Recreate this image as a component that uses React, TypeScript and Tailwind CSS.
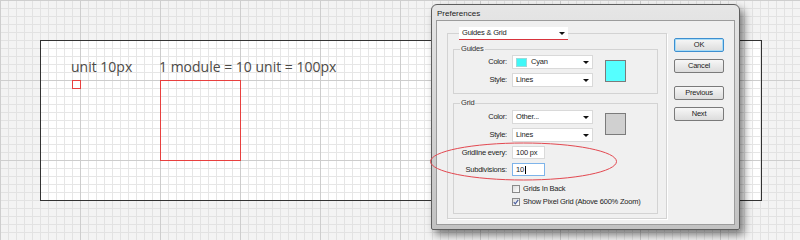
import React from "react";

function Select({ children, w = "w-[81px]" }: { children: React.ReactNode; w?: string }) {
  return (
    <div className={`flex items-center h-[14px] ${w} bg-white border border-[#d9d9d9] pl-[3px] pr-[3px]`}>
      <div className="flex-1 flex items-center gap-[4px] leading-none">{children}</div>
      <div className="w-0 h-0 border-l-[3px] border-r-[3px] border-t-[3px] border-l-transparent border-r-transparent border-t-[#111]" />
    </div>
  );
}

function Label({ children }: { children: React.ReactNode }) {
  return <div className="w-[54px] text-right leading-none pr-[1px]">{children}</div>;
}

function Btn({ children, focus = false, mt = "" }: { children: React.ReactNode; focus?: boolean; mt?: string }) {
  return (
    <div
      className={`${mt} w-[50px] h-[14px] rounded-[2px] flex items-center justify-center leading-none bg-gradient-to-b from-[#f7f7f7] to-[#dcdcdc] ${
        focus ? "border border-[#3d8fd0] shadow-[inset_0_0_0_1px_#a9dcf6]" : "border border-[#7a7a7a]"
      }`}
    >
      {children}
    </div>
  );
}

function Check({ checked = false, children }: { checked?: boolean; children: React.ReactNode }) {
  return (
    <div className="flex items-center h-[10px] ml-[58px] gap-[3px] leading-none">
      <div className="w-[8px] h-[8px] border border-[#8a8a8a] bg-gradient-to-br from-[#dcdcdc] to-[#ffffff] flex items-center justify-center">
        {checked && (
          <svg width="6" height="6" viewBox="0 0 6 6">
            <path d="M0.8 3.2 L2.3 4.8 L5.2 0.8" stroke="#4a5fa0" strokeWidth="1.2" fill="none" />
          </svg>
        )}
      </div>
      <span>{children}</span>
    </div>
  );
}

export default function App() {
  const canvasGrid =
    "bg-[image:linear-gradient(to_right,#cecece_1px,transparent_1px),linear-gradient(to_bottom,#cecece_1px,transparent_1px),linear-gradient(to_right,#e2e2e2_1px,transparent_1px),linear-gradient(to_bottom,#e2e2e2_1px,transparent_1px)] bg-[length:80px_80px,80px_80px,8px_8px,8px_8px]";
  return (
    <div
      className={`relative w-[800px] h-[240px] overflow-hidden pt-[40px] pl-[40px] bg-[#f3f3f3] ${canvasGrid}`}
    >
      {/* Artboard */}
      <div className="w-[722px] h-[161px] border border-[#333333] bg-white bg-[image:linear-gradient(to_right,#cdcdcd_1px,transparent_1px),linear-gradient(to_bottom,#cdcdcd_1px,transparent_1px),linear-gradient(to_right,#e6e6e6_1px,transparent_1px),linear-gradient(to_bottom,#e6e6e6_1px,transparent_1px)] bg-[length:80px_80px,80px_80px,8px_8px,8px_8px] bg-[position:40px_40px] bg-origin-border pt-[18px] pl-[31px] flex font-['Open_Sans',sans-serif] text-[14px] text-[#4d4a46]">
        <div className="w-[88px] flex flex-col">
          <div className="leading-[16px] -ml-[1px] whitespace-nowrap">unit 10px</div>
          <div className="mt-[5px] w-[9px] h-[9px] border border-[#e8403f]" />
        </div>
        <div className="flex flex-col">
          <div className="leading-[16px] -ml-[1px] whitespace-nowrap">1 module = 10 unit = 100px</div>
          <div className="mt-[5px] w-[81px] h-[81px] border border-[#e8403f]" />
        </div>
      </div>

      {/* Dialog window */}
      <div className="absolute left-[431px] top-[4px] w-[309px] h-[226px] rounded-t-[6px] rounded-b-[2px] border border-[#5e5e5e] bg-gradient-to-b from-[#e6e6e6] via-[#d4d4d4] to-[#c2c2c2] shadow-[4px_5px_9px_rgba(0,0,0,0.5)] px-[4px] pb-[4px] flex flex-col font-['Liberation_Sans',Arial,sans-serif] text-[#1c1c1c]">
        <div className="h-[15px] pt-[4px] pl-[1px] text-[8px] leading-[10px] text-[#1a1a1a]">Preferences</div>
        <div className="flex-1 border border-[#9c9c9c] bg-[#f0f0f0] flex pl-[10px] pt-[6px] text-[7.5px] tracking-[-0.2px]">
          {/* main panel */}
          <fieldset className="w-[220px] self-start border border-[#d3d3d3] shadow-[1px_1px_0_#ffffff] px-[5px] pb-[4px]">
            <legend className="ml-[6px]">
              <div className="flex items-center h-[13px] w-[109px] bg-white border-b border-b-[#d8333c] pl-[3px] pr-[3px]">
                <div className="flex-1 leading-none">Guides &amp; Grid</div>
                <div className="w-0 h-0 border-l-[3px] border-r-[3px] border-t-[3px] border-l-transparent border-r-transparent border-t-[#111]" />
              </div>
            </legend>
            <div className="pt-[4px]">
              {/* Guides group */}
              <fieldset className="w-[205px] border border-[#d3d3d3] pt-[1px] pb-[6px]">
                <legend className="ml-[6px] px-[1px] leading-[10px] text-[#333]">Guides</legend>
                <div className="flex items-center">
                  <div className="flex flex-col gap-[4px]">
                    <div className="flex items-center gap-[4px]">
                      <Label>Color:</Label>
                      <Select>
                        <div className="w-[11px] h-[9px] bg-[#3ff7f7] border border-[#9adada]" />
                        <span>Cyan</span>
                      </Select>
                    </div>
                    <div className="flex items-center gap-[4px]">
                      <Label>Style:</Label>
                      <Select>
                        <span>Lines</span>
                      </Select>
                    </div>
                  </div>
                  <div className="ml-[12px] w-[21px] h-[22px] bg-[#55ffff] border border-[#7b7b7b]" />
                </div>
              </fieldset>
              {/* Grid group */}
              <fieldset className="mt-[4px] w-[205px] border border-[#d3d3d3] pt-[2px] pb-[6px]">
                <legend className="ml-[6px] px-[1px] leading-[10px] text-[#333]">Grid</legend>
                <div className="flex items-start">
                  <div className="flex flex-col gap-[4px]">
                    <div className="flex items-center gap-[4px]">
                      <Label>Color:</Label>
                      <Select>
                        <span>Other...</span>
                      </Select>
                    </div>
                    <div className="flex items-center gap-[4px]">
                      <Label>Style:</Label>
                      <Select>
                        <span>Lines</span>
                      </Select>
                    </div>
                  </div>
                  <div className="ml-[12px] mt-[3px] w-[21px] h-[22px] bg-[#d0d0d0] border border-[#7b7b7b]" />
                </div>
                <div className="mt-[4px] flex items-center gap-[4px]">
                  <Label>Gridline every:</Label>
                  <div className="w-[33px] h-[13px] bg-white border border-[#dadada] flex items-center pl-[3px] leading-none">
                    100 px
                  </div>
                </div>
                <div className="mt-[4px] flex items-center gap-[4px]">
                  <Label>Subdivisions:</Label>
                  <div className="w-[33px] h-[13px] bg-white border border-[#7eb4ea] flex items-center pl-[3px] leading-none">
                    10<span className="ml-[1px] w-[1px] h-[8px] bg-black" />
                  </div>
                </div>
                <div className="mt-[8px]">
                  <Check>Grids In Back</Check>
                </div>
                <div className="mt-[3px]">
                  <Check checked>Show Pixel Grid (Above 600% Zoom)</Check>
                </div>
              </fieldset>
            </div>
          </fieldset>
          {/* buttons */}
          <div className="ml-[7px] mt-[11px] flex flex-col">
            <Btn focus>OK</Btn>
            <Btn mt="mt-[7px]">Cancel</Btn>
            <Btn mt="mt-[13px]">Previous</Btn>
            <Btn mt="mt-[7px]">Next</Btn>
          </div>
        </div>
      </div>

      {/* Annotation ellipse */}
      <svg className="absolute left-0 top-0 pointer-events-none" width="800" height="240" viewBox="0 0 800 240">
        <ellipse cx="523.5" cy="161.5" rx="93" ry="18.5" fill="none" stroke="#e34850" strokeWidth="1" />
      </svg>
    </div>
  );
}
